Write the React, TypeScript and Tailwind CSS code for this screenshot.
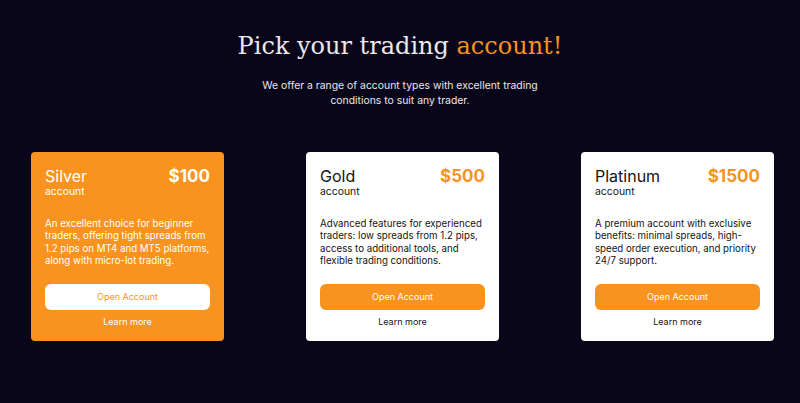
const plans = [
  {
    name: "Silver",
    price: "$100",
    text: "An excellent choice for beginner traders, offering tight spreads from 1.2 pips on MT4 and MT5 platforms, along with micro-lot trading.",
    featured: true,
  },
  {
    name: "Gold",
    price: "$500",
    text: "Advanced features for experienced traders: low spreads from 1.2 pips, access to additional tools, and flexible trading conditions.",
    featured: false,
  },
  {
    name: "Platinum",
    price: "$1500",
    text: "A premium account with exclusive benefits: minimal spreads, high-speed order execution, and priority 24/7 support.",
    featured: false,
  },
]

const PlanCard = ({ name, price, text, featured }: (typeof plans)[number]) => {
  return (
    <div
      className={`w-[193px] h-[189px] rounded-[4px] px-[14px] pt-[15px] flex flex-col ${
        featured ? "bg-[#f7931e] text-white" : "bg-white text-[#141414]"
      }`}
    >
      <div className="flex justify-between items-start">
        <div>
          <div className="text-[16px] leading-[18px]">{name}</div>
          <div className="text-[10.4px] leading-[13px]">account</div>
        </div>
        <div className={`text-[17px] leading-[18px] font-bold ${featured ? "text-white" : "text-[#f7931e]"}`}>
          {price}
        </div>
      </div>
      <p className="mt-[20px] text-[9.7px] leading-[12.4px] h-[50px]">{text}</p>
      <button
        className={`mt-[16px] h-[26px] w-full shrink-0 rounded-[6px] text-[9px] ${
          featured ? "bg-white text-[#f7931e]" : "bg-[#f7931e] text-white"
        }`}
      >
        Open Account
      </button>
      <a className="mt-[6px] text-center text-[9px] leading-[12px]">Learn more</a>
    </div>
  )
}

const App = () => {
  return (
    <div className="w-[800px] h-[403px] bg-[#0a0619] overflow-hidden" style={{ fontFamily: "Inter, 'Noto Sans', sans-serif" }}>
      <h1
        className="pt-[30px] text-center text-[24px] leading-[32px] font-light text-[#e9e9ee]"
        style={{ fontFamily: "'DejaVu Serif', 'Liberation Serif', serif" }}
      >
        Pick your trading <span className="text-[#f7931e]">account!</span>
      </h1>
      <p className="mt-[16px] mx-auto w-[300px] text-center text-[10.4px] leading-[15px] text-[#e6e6ec]">
        We offer a range of account types with excellent trading conditions to suit any trader.
      </p>
      <div className="mt-[44px] flex justify-center gap-[82px] pl-[5px]">
        {plans.map(p => (
          <PlanCard key={p.name} {...p} />
        ))}
      </div>
    </div>
  )
}

export default App
